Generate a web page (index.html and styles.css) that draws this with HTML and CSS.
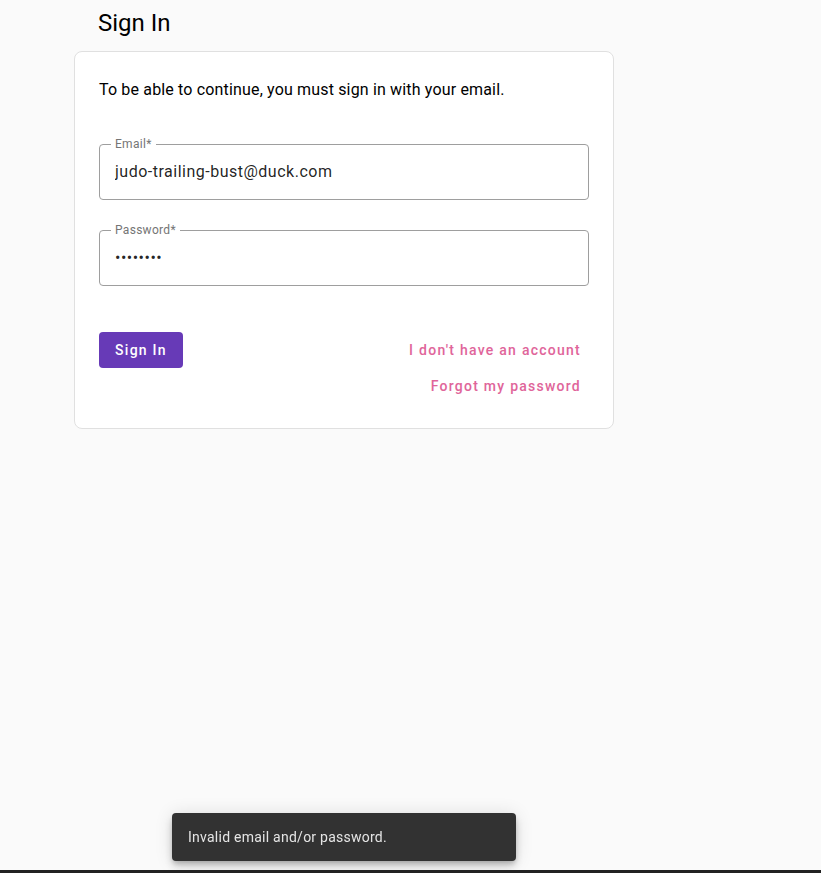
FILE: index.html
```html
<!DOCTYPE html>
<html lang="en">
<head>
    <meta charset="UTF-8">
    <meta name="viewport" content="width=device-width, initial-scale=1.0">
    <title>Sign In</title>
    <link rel="stylesheet" href="styles.css">
</head>
<body>
    <div class="page">
        <h1 class="title">Sign In</h1>
        <div class="card">
            <p class="intro">To be able to continue, you must sign in with your email.</p>
            <form class="form">
                <fieldset class="field">
                    <legend>Email*</legend>
                    <input type="email" value="judo-trailing-bust@duck.com">
                </fieldset>
                <fieldset class="field">
                    <legend>Password*</legend>
                    <input type="password" value="password">
                </fieldset>
                <div class="actions">
                    <button type="submit" class="btn-primary">Sign In</button>
                    <div class="links">
                        <a href="#" class="btn-link">I don't have an account</a>
                        <a href="#" class="btn-link">Forgot my password</a>
                    </div>
                </div>
            </form>
        </div>
    </div>

    <div class="snackbar">Invalid email and/or password.</div>
    <div class="bottom-bar"></div>
</body>
</html>
```

FILE: styles.css
```css
body { margin: 0; background: #fafafa; font-family: Roboto, "Noto Sans", sans-serif; color: rgba(0,0,0,.87); }
.page { width: 540px; margin-left: 74px; }
.title { font-size: 24px; font-weight: 400; line-height: 32px; margin: 7px 0 12px; padding-left: 24px; color: #000; }
.card { background: #fff; border: 1px solid #e0e0e0; border-radius: 8px; padding: 26px 24px 24px; }
.intro { margin: 0 0 34px; font-size: 16px; line-height: 24px; letter-spacing: .16px; color: #000; }
.field { margin: 0 0 22px; padding: 0 0 0 11px; border: 1px solid #9e9e9e; border-radius: 4px; height: 64px; box-sizing: border-box; min-width: 0; }
.field legend { padding: 0 4px; font-size: 12px; line-height: 16px; color: #757575; letter-spacing: .3px; }
.field input { display: block; width: 100%; box-sizing: border-box; border: none; outline: none; background: transparent; padding: 8px 4px 0; margin: 0; font-family: inherit; font-size: 16px; line-height: 24px; letter-spacing: .5px; color: rgba(0,0,0,.87); }
.actions { display: flex; justify-content: space-between; align-items: flex-start; margin-top: 46px; }
.btn-primary { height: 36px; width: 84px; border: none; border-radius: 4px; background: #673ab7; color: #fff; font-family: inherit; font-size: 14px; font-weight: 500; letter-spacing: 1.25px; cursor: pointer; }
.links { display: flex; flex-direction: column; align-items: flex-end; }
.btn-link { display: block; height: 36px; line-height: 36px; padding: 0 8px; font-size: 14px; font-weight: 500; letter-spacing: 1.25px; color: #e0659a; text-decoration: none; }
.snackbar { position: fixed; left: 172px; bottom: 12px; width: 344px; height: 48px; box-sizing: border-box; padding: 0 16px; display: flex; align-items: center; background: #323232; color: rgba(255,255,255,.87); border-radius: 4px; font-size: 14px; letter-spacing: .25px; box-shadow: 0 3px 5px -1px rgba(0,0,0,.2), 0 6px 10px 0 rgba(0,0,0,.14), 0 1px 18px 0 rgba(0,0,0,.12); }
.bottom-bar { position: fixed; left: 0; right: 0; bottom: 0; height: 3px; background: #222; }
```
